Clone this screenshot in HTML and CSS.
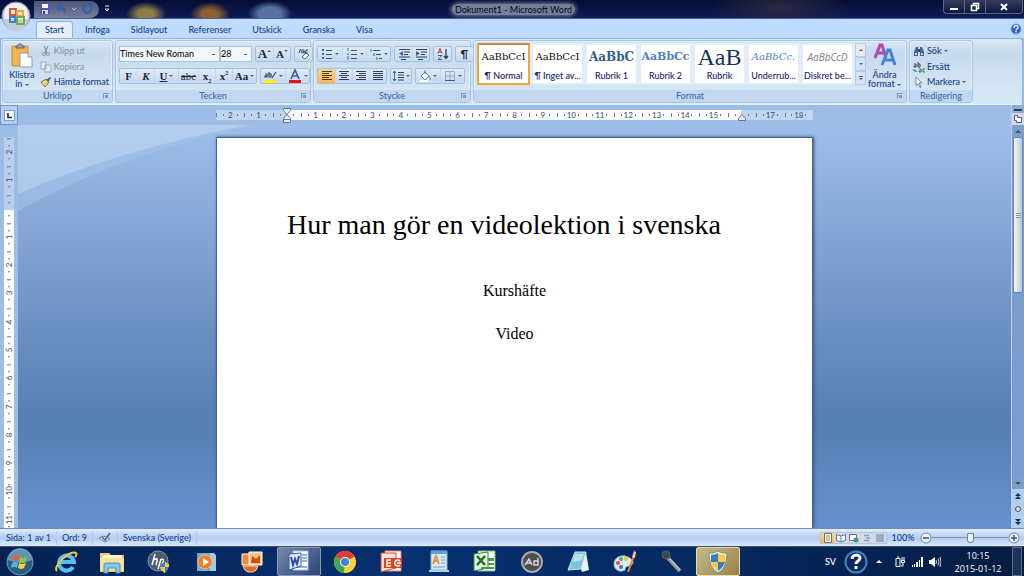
FILE: index.html
```html
<!doctype html>
<html lang="sv">
<head>
<meta charset="UTF-8">
<title>Dokument1 - Microsoft Word</title>
<link rel="stylesheet" href="styles.css">
</head>
<body>
	<header class="titlebar">
		<button class="orb" aria-label="Office-knappen">
			<svg viewBox="0 0 30 30" width="30" height="30">
				<circle cx="15" cy="15" r="14" fill="#c9d3e2" stroke="#8592aa"/>
				<circle cx="15" cy="14" r="12" fill="#eef1f6"/>
				<path d="M3 18a12 12 0 0 0 24 0z" fill="#c3cbd9"/>
				<g fill="none" stroke-width="2"><rect x="9" y="8" width="6" height="6" stroke="#e2572b"/><rect x="16" y="10" width="6" height="5" stroke="#f2a52c"/><rect x="9" y="16" width="5" height="5" stroke="#3c7fd0"/><rect x="16" y="16" width="7" height="7" stroke="#6fae3e"/></g>
			</svg>
		</button>
		<div class="quick">
			<button aria-label="Spara"><svg viewBox="0 0 12 12" width="12" height="12"><path d="M1 1h10v10H1z" fill="#4d58b8"/><path d="M3 1h6v4H3z" fill="#f4f6ff"/><path d="M3 7h6v4H3z" fill="#d4dbf4"/><path d="M4 8h2v3H4z" fill="#363f8b"/></svg></button>
			<button aria-label="Ångra"><svg viewBox="0 0 12 12" width="12" height="12"><path d="M1 5l4-4v3c5-1 7 3 4 7 0-3-1-4-4-4v2z" fill="#355fae"/></svg></button>
			<button class="narrow" aria-label="Ångra flera"><svg viewBox="0 0 6 6" width="6" height="6"><path d="M1 2l2 2 2-2" fill="none" stroke="#c3cbe0"/></svg></button>
			<button aria-label="Gör om"><svg viewBox="0 0 12 12" width="12" height="12"><path d="M5 2a4 4 0 1 0 5 3" fill="none" stroke="#2e5bb4" stroke-width="2"/><path d="M6 0h5v5z" fill="#2e5bb4"/></svg></button>
		</div>
		<button class="custom" aria-label="Anpassa"><svg viewBox="0 0 6 8" width="6" height="8"><path d="M1 1h4" stroke="#dfe6f5"/><path d="M1 4l2 2 2-2z" fill="none" stroke="#dfe6f5"/></svg></button>
		<h1 class="title"><span>Dokument1 - Microsoft Word</span></h1>
		<div class="winbtns">
			<button aria-label="Minimera"><svg viewBox="0 0 10 10" width="10" height="10"><path d="M1 6h8v2H1z" fill="#fff"/></svg></button>
			<button aria-label="Återställ"><svg viewBox="0 0 10 10" width="10" height="10"><path d="M3.500 3V1.500h5v5H7M1.500 3.500h5v5h-5z" fill="none" stroke="#fff" stroke-width="1.500"/></svg></button>
			<button class="close" aria-label="Stäng"><svg viewBox="0 0 10 10" width="10" height="10"><path d="M2 2l6 6M8 2L2 8" stroke="#fff" stroke-width="2"/></svg></button>
		</div>
	</header>

	<nav class="tabs">
		<a class="tab on" href="#">Start</a>
		<a class="tab" href="#">Infoga</a>
		<a class="tab" href="#">Sidlayout</a>
		<a class="tab" href="#">Referenser</a>
		<a class="tab" href="#">Utskick</a>
		<a class="tab" href="#">Granska</a>
		<a class="tab" href="#">Visa</a>
		<button class="help" aria-label="Hjälp"><svg viewBox="0 0 12 12" width="12" height="12"><circle cx="6" cy="6" r="5" fill="#2f62c4" stroke="#7c9ddd"/><path d="M4 5c0-3 4-3 4-.5C8 6 6 6 6 7.500M6 8v1.500" fill="none" stroke="#fff" stroke-width="1.300"/></svg></button>
	</nav>

	<div class="ribbon">
		<section class="group clip">
			<div class="tools">
				<button class="big paste">
					<svg viewBox="0 0 22 25" width="22" height="25"><rect x="1" y="3" width="16" height="20" rx="1" fill="#f0b54e" stroke="#c98e2d"/><path d="M5 5V3h2c0-3 4-3 4 0h2v2z" fill="#9aa3b1" stroke="#5c6675"/><path d="M9 10h8l4 4v10H9z" fill="#fff" stroke="#8b9cb8"/><path d="M17 10v4h4" fill="#dfe7f2" stroke="#8b9cb8"/></svg>
					<span>Klistra<br>in <i class="arr"></i></span>
				</button>
				<div class="list">
					<button class="off"><svg viewBox="0 0 12 12" width="12" height="12"><path d="M4 1l3 7M8 1L5 8" stroke="#8d99ae" stroke-width="1.200"/><circle cx="4" cy="9" r="1.600" fill="none" stroke="#8d99ae"/><circle cx="8" cy="9" r="1.600" fill="none" stroke="#8d99ae"/></svg>Klipp ut</button>
					<button class="off"><svg viewBox="0 0 12 12" width="12" height="12"><path d="M1 1h5v7H1zM5 4h5l1 1v6H5z" fill="#e8edf5" stroke="#9aa8bf"/></svg>Kopiera</button>
					<button><svg viewBox="0 0 12 12" width="12" height="12"><path d="M1 6l5-3 3 3-4 5z" fill="#f2d27c" stroke="#8d7233"/><path d="M6 4l4-3 1 1-3 4z" fill="#4f5f85"/></svg>Hämta format</button>
				</div>
			</div>
			<footer>Urklipp<i class="more"></i></footer>
		</section>

		<section class="group font">
			<div class="tools rows">
				<div class="row">
					<div class="combo">
						<select class="face" aria-label="Teckensnitt"><option>Times New Roman</option></select>
						<select class="size" aria-label="Teckenstorlek"><option>28</option></select>
					</div>
					<div class="set">
						<button class="serif grow" aria-label="Förstora">A<i class="arr up"></i></button>
						<button class="serif shrink" aria-label="Förminska">A<i class="arr"></i></button>
					</div>
					<div class="set">
						<button aria-label="Radera formatering"><svg viewBox="0 0 14 14" width="14" height="14"><path d="M2 6l1.500-4L5 6M6 2v4M6 4h2v2H6M11 3H9v3h2" fill="none" stroke="#3c4763"/><path d="M5 10l4-4 3 2-4 4z" fill="#fff" stroke="#5f6c8e"/></svg></button>
					</div>
				</div>
				<div class="row">
					<div class="set">
						<button class="serif"><b>F</b></button>
						<button class="serif"><b><em>K</em></b></button>
						<button class="serif wide"><b><u>U</u></b> <i class="arr"></i></button>
						<button class="serif strike"><s>abc</s></button>
						<button class="serif"><b>x<sub>2</sub></b></button>
						<button class="serif"><b>x<sup>2</sup></b></button>
						<button class="serif wide"><b>Aa</b><i class="arr"></i></button>
					</div>
					<div class="set">
						<button class="wide" aria-label="Överstrykning"><svg viewBox="0 0 14 14" width="14" height="14"><path d="M1 11h12v3H1z" fill="#fff200"/><path d="M2 5h2v3H2V7h2M6 3v5h2V5H6M9 9l4-6" fill="none" stroke="#39435c" stroke-width="1.200"/></svg><i class="arr"></i></button>
						<button class="wide" aria-label="Teckenfärg"><svg viewBox="0 0 14 14" width="14" height="14"><path d="M1 11h12v3H1z" fill="#e8141c"/><path d="M3 10l4-9 4 9M4.500 7h5" fill="none" stroke="#3c5b9c" stroke-width="1.600"/></svg><i class="arr"></i></button>
					</div>
				</div>
			</div>
			<footer>Tecken<i class="more"></i></footer>
		</section>

		<section class="group para">
			<div class="tools rows">
				<div class="row">
					<div class="set">
						<button class="wide" aria-label="Punktlista"><svg viewBox="0 0 12 12" width="12" height="12"><path d="M1 2h2M1 6h2M1 10h2" stroke="#3b64ad" stroke-width="2"/><path d="M5 2.500h6M5 6.500h6M5 10.500h6" stroke="#444f68"/></svg><i class="arr"></i></button>
						<button class="wide" aria-label="Numrering"><svg viewBox="0 0 12 12" width="12" height="12"><path d="M2 0v3M1 6h2M2 8v4" stroke="#3b64ad"/><path d="M5 2.500h6M5 6.500h6M5 10.500h6" stroke="#444f68"/></svg><i class="arr"></i></button>
						<button class="wide" aria-label="Flernivålista"><svg viewBox="0 0 12 12" width="12" height="12"><path d="M1 1v3M4 5v3M7 9v3" stroke="#3b64ad"/><path d="M3 2.500h7M6 6.500h5M9 10.500h3" stroke="#444f68"/></svg><i class="arr"></i></button>
					</div>
					<div class="set">
						<button aria-label="Minska indrag"><svg viewBox="0 0 12 12" width="12" height="12"><path d="M1 1.500h11M6 4h6M6 6.500h4M1 9h11M3 11.500h5" stroke="#333e58"/><path d="M5 3v5L1 5.500z" fill="#3b64ad"/></svg></button>
						<button aria-label="Öka indrag"><svg viewBox="0 0 12 12" width="12" height="12"><path d="M1 1.500h11M6 4h6M6 6.500h4M1 9h11M3 11.500h5" stroke="#333e58"/><path d="M1 3v5l4-2.500z" fill="#3b64ad"/></svg></button>
					</div>
					<div class="set">
						<button aria-label="Sortera"><svg viewBox="0 0 12 12" width="12" height="12"><path d="M1 5.500L3 .5l2 5M2 4h2" fill="none" stroke="#b3363c"/><path d="M1 7.500h4l-4 4h4" fill="none" stroke="#3b64ad"/><path d="M9 1v9M7 8l2 2.500L11 8" fill="none" stroke="#333e58" stroke-width="1.300"/></svg></button>
					</div>
					<div class="set">
						<button class="mark" aria-label="Visa alla">¶</button>
					</div>
				</div>
				<div class="row">
					<div class="set">
						<button class="lit" aria-label="Vänsterjustera"><svg viewBox="0 0 12 12" width="12" height="12"><path d="M1 1.500h10M1 3.500h7M1 5.500h10M1 7.500h7M1 9.500h10" stroke="#4b3c22"/></svg></button>
						<button aria-label="Centrera"><svg viewBox="0 0 12 12" width="12" height="12"><path d="M1 1.500h10M3 3.500h6M1 5.500h10M3 7.500h6M1 9.500h10" stroke="#333e58"/></svg></button>
						<button aria-label="Högerjustera"><svg viewBox="0 0 12 12" width="12" height="12"><path d="M1 1.500h10M4 3.500h7M1 5.500h10M4 7.500h7M1 9.500h10" stroke="#333e58"/></svg></button>
						<button aria-label="Marginaljustera"><svg viewBox="0 0 12 12" width="12" height="12"><path d="M1 1.500h10M1 3.500h10M1 5.500h10M1 7.500h10M1 9.500h10" stroke="#333e58"/></svg></button>
					</div>
					<div class="set">
						<button class="tight" aria-label="Radavstånd"><svg viewBox="0 0 12 12" width="12" height="12"><path d="M2.500 1v10M1 3l1.500-2L4 3M1 9l1.500 2L4 9" fill="none" stroke="#3b64ad"/><path d="M6 2.500h6M6 5h6M6 7.500h6M6 10h6" stroke="#333e58"/></svg><i class="arr"></i></button>
					</div>
					<div class="set">
						<button class="wide" aria-label="Fyllning"><svg viewBox="0 0 12 12" width="12" height="12"><path d="M2 6l4-4 4 4-4 4z" fill="#f2f5fa" stroke="#7383a0"/><path d="M6 4V0M10 6c1 2 2 3 1 4" fill="none" stroke="#5b77ab"/><path d="M1 10h8v2H1z" fill="#fff"/></svg><i class="arr"></i></button>
						<button class="wide" aria-label="Kantlinjer"><svg viewBox="0 0 12 12" width="12" height="12"><path d="M1.500 1.500h9v9M1.500 1.500v9M6 1v9M1 6h10" fill="none" stroke="#9aa8c2"/><path d="M1 10.500h10" stroke="#4a5a7d"/></svg><i class="arr"></i></button>
					</div>
				</div>
			</div>
			<footer>Stycke<i class="more"></i></footer>
		</section>

		<section class="group format">
			<div class="tools">
				<div class="gallery">
					<button class="style on"><span class="s-text">AaBbCcI</span>¶ Normal</button>
					<button class="style"><span class="s-text">AaBbCcI</span>¶ Inget av...</button>
					<button class="style"><span class="s-text s-h1">AaBbC</span>Rubrik 1</button>
					<button class="style"><span class="s-text s-h2">AaBbCc</span>Rubrik 2</button>
					<button class="style"><span class="s-text s-title">AaB</span>Rubrik</button>
					<button class="style"><span class="s-text s-sub">AaBbCc.</span>Underrub...</button>
					<button class="style"><span class="s-text s-weak">AaBbCcD</span>Diskret be...</button>
					<div class="scroller">
						<button class="dim" aria-label="Upp"><i class="arr up"></i></button>
						<button aria-label="Ned"><i class="arr"></i></button>
						<button aria-label="Mer"><i class="arr bar"></i></button>
					</div>
				</div>
				<button class="big change">
					<svg viewBox="0 0 24 25" width="24" height="25"><path d="M2 15L7 2h2l4 13M4 10h8" fill="none" stroke="#b04bb5" stroke-width="3"/><path d="M9 22l6-15h2l5 15M11 17h9" fill="none" stroke="#4585d0" stroke-width="3"/></svg>
					<span>Ändra<br>format <i class="arr"></i></span>
				</button>
			</div>
			<footer>Format<i class="more"></i></footer>
		</section>

		<section class="group edit">
			<div class="tools">
				<div class="list">
					<button><svg viewBox="0 0 12 12" width="12" height="12"><path d="M1 11V7l2-5h2v9zM7 11V2h2l2 5v4z" fill="#45618f"/><path d="M5 4h2v3H5z" fill="#2d4269"/><path d="M2 8h2v2H2zM8 8h2v2H8z" fill="#b9cbe8"/></svg>Sök <i class="arr"></i></button>
					<button><svg viewBox="0 0 12 12" width="12" height="12"><path d="M1 3h2v3H1V5h2M5 1v5h2V3H5" fill="none" stroke="#39435c"/><path d="M6 8h2v3H6v-1h2M12 8h-2v3h2" fill="none" stroke="#2e8b3d"/><path d="M1 8v2h3" fill="none" stroke="#3b64ad"/></svg>Ersätt</button>
					<button><svg viewBox="0 0 12 12" width="12" height="12"><path d="M3 1l6 6H6l2 4-1 .5L5 8 3 9.500z" fill="#fff" stroke="#7584a0"/></svg>Markera <i class="arr"></i></button>
				</div>
			</div>
			<footer>Redigering</footer>
		</section>
	</div>

	<main class="work">
		<div class="left">
			<button class="tabstop" aria-label="Tabbtyp"><svg viewBox="0 0 11 11" width="11" height="11"><rect x=".5" y=".5" width="10" height="10" fill="#f4f8ff" stroke="#7d9cca"/><path d="M4 3v4.500h4" fill="none" stroke="#1b2740" stroke-width="1.600"/></svg></button>
			<div class="vruler">
				<span>2</span><span>1</span><span class="zero"></span><span>1</span><span>2</span><span>3</span><span>4</span><span>5</span><span>6</span><span>7</span><span>8</span><span>9</span><span>10</span><span>11</span>
			</div>
		</div>
		<div class="center">
			<div class="hrow">
				<div class="hruler">
					<span>2</span><span>1</span><span class="zero"><svg viewBox="0 0 10 16" width="10" height="16"><path d="M1.500.5h7v2L5 6.500l3.500 4v4h-7v-4L5 6.500l-3.500-4zM1.500 11.500h7" fill="#eaf1fb" stroke="#64799f"/></svg></span><span>1</span><span>2</span><span>3</span><span>4</span><span>5</span><span>6</span><span>7</span><span>8</span><span>9</span><span>10</span><span>11</span><span>12</span><span>13</span><span>14</span><span>15</span><span class="zero"><svg viewBox="0 0 10 16" width="10" height="16"><path d="M1.500 12.500v-2L5 6.500l3.500 4v2z" fill="#eaf1fb" stroke="#64799f"/></svg></span><span>17</span><span>18</span>
				</div>
			</div>
			<div class="desk">
				<svg class="swoosh" viewBox="0 0 240 90" width="240" height="90"><path d="M0 0h235Q100 30 0 86z" fill="#a5c3ea" fill-opacity=".5"/><path d="M0 0h230Q100 25 0 69z" fill="#c3daf3" fill-opacity=".5"/></svg>
				<article class="page">
					<h2>Hur man gör en videolektion i svenska</h2>
					<p>Kurshäfte</p>
					<p>Video</p>
				</article>
			</div>
		</div>
		<div class="scroll">
			<i class="split"></i>
			<button class="rulerbtn" aria-label="Visa linjal"><svg viewBox="0 0 10 10" width="10" height="10"><path d="M1.500 1.500h3v2h4v5h-5v-2h-2z" fill="#fff" stroke="#5d5c80"/></svg></button>
			<button class="end-btn" aria-label="Upp"><i class="arr up"></i></button>
			<div class="track"><div class="thumb"><i></i></div></div>
			<button class="end-btn" aria-label="Ned"><i class="arr"></i></button>
			<div class="browse">
				<button aria-label="Föregående sida"><svg viewBox="0 0 8 8" width="8" height="8"><path d="M1 4l3-3 3 3zM1 7l3-3 3 3z" fill="#1b2c55"/></svg></button>
				<button aria-label="Bläddra"><svg viewBox="0 0 8 8" width="8" height="8"><circle cx="4" cy="4" r="2.500" fill="#e9e4da" stroke="#4b5064"/></svg></button>
				<button aria-label="Nästa sida"><svg viewBox="0 0 8 8" width="8" height="8"><path d="M1 1l3 3 3-3zM1 4l3 3 3-3z" fill="#1b2c55"/></svg></button>
			</div>
		</div>
	</main>

	<div class="status">
		<span class="cell">Sida: 1 av 1</span>
		<span class="cell">Ord: 9</span>
		<span class="cell"><svg viewBox="0 0 14 12" width="14" height="12"><path d="M1 6l5-2 6 3-5 3z" fill="#fff" stroke="#6579a0"/><path d="M4 5l3 3 5-7" fill="none" stroke="#3f5f9c" stroke-width="1.500"/></svg></span>
		<span class="cell">Svenska (Sverige)</span>
		<div class="views">
			<button class="lit" aria-label="Utskriftslayout"><svg viewBox="0 0 10 10" width="10" height="10"><path d="M1.500.5h7v9h-7z" fill="#fff" stroke="#7b6a44"/><path d="M3 3h4M3 5h4M3 7h4" stroke="#98876a"/></svg></button>
			<button aria-label="Helskärmsläsning"><svg viewBox="0 0 10 10" width="10" height="10"><path d="M.5 1.500L5 3l4.500-1.500v6L5 9 .5 7.500zM5 3v6" fill="#fff" stroke="#66738d"/></svg></button>
			<button aria-label="Webblayout"><svg viewBox="0 0 10 10" width="10" height="10"><path d="M.5 1.500h7v6h-7z" fill="#fff" stroke="#66738d"/><circle cx="7" cy="7" r="2.500" fill="#4c8f72"/></svg></button>
			<button aria-label="Disposition"><svg viewBox="0 0 10 10" width="10" height="10"><path d="M2 2.500h5M4 5h4M2 7.500h5" stroke="#8f9db5" stroke-width="1.500"/></svg></button>
			<button aria-label="Utkast"><svg viewBox="0 0 10 10" width="10" height="10"><path d="M1 2h8M1 4h8M1 6h8M1 8h8" stroke="#8f9db5" stroke-width="1.500"/></svg></button>
		</div>
		<button class="percent">100%</button>
		<div class="zoom">
			<button aria-label="Zooma ut"><svg viewBox="0 0 12 12" width="12" height="12"><circle cx="6" cy="6" r="5" fill="#f0f5fc" stroke="#6d83ab"/><path d="M3 6h6" stroke="#3d4d70" stroke-width="1.500"/></svg></button>
			<input type="range" min="0" max="100" value="50" aria-label="Zooma">
			<button aria-label="Zooma in"><svg viewBox="0 0 12 12" width="12" height="12"><circle cx="6" cy="6" r="5" fill="#f0f5fc" stroke="#6d83ab"/><path d="M3 6h6M6 3v6" stroke="#3d4d70" stroke-width="1.500"/></svg></button>
		</div>
	</div>

	<footer class="taskbar">
		<button class="start" aria-label="Start"><svg viewBox="0 0 28 28" width="28" height="28"><circle cx="14" cy="14" r="13" fill="#2a5c86" stroke="#6f9cb8"/><path d="M2 12a12 12 0 0 1 24 0Q14 18 2 12z" fill="#8fb8cc" fill-opacity=".6"/><path d="M7 9q3-3 6-1l-1 5q-3-2-6 0z" fill="#f1592a"/><path d="M14 9q3 2 7 0l-1 5q-4 2-7 0z" fill="#8cc63f"/><path d="M6 15q3-2 6 0l-1 5q-3-2-6 0z" fill="#4fb3f0"/><path d="M13 15q3 2 7 0l-2 5q-3 2-6 0z" fill="#ffd02e"/></svg></button>
		<div class="apps">
			<button aria-label="Internet Explorer"><svg viewBox="0 0 24 24" width="24" height="24"><path d="M19 17a7.500 7.500 0 1 1 1-5H7" fill="none" stroke="#58bdf0" stroke-width="4"/><path d="M3 21C-2 17 15 0 22 3c1 1 0 3-1 4" fill="none" stroke="#f5c842" stroke-width="2"/></svg></button>
			<button aria-label="Utforskaren"><svg viewBox="0 0 26 24" width="26" height="24"><path d="M1 3h9l2 2h13v17H1z" fill="#e8c868"/><path d="M3 5h20v5H3z" fill="#fff6cf"/><path d="M1 8h24v13H1z" fill="#f6e199"/><path d="M5 23v-8q0-2 2-2h12q2 0 2 2v8h-4v-5H9v5z" fill="#86c5ea" stroke="#4d93c4"/></svg></button>
			<button aria-label="HP"><svg viewBox="0 0 24 24" width="24" height="24"><circle cx="11" cy="11" r="10" fill="#4b5b70" stroke="#8496ab"/><path d="M8 4L5 15M7 10q4-3 3 1L9 15M14 9l-3 10M13 10q5-2 3 2-1 4-4 2" fill="none" stroke="#fff" stroke-width="1.500"/><path d="M13 14l5-2 4 2q0 6-4 9-5-3-5-9z" fill="#3e7fd0"/><path d="M18 12l4 2v3h-4zM13 17h5v6q-4-2-5-6z" fill="#f6c935"/></svg></button>
			<button aria-label="Windows Media Player"><svg viewBox="0 0 24 24" width="24" height="24"><path d="M3 3h17l2 2v16H3z" fill="#9ccbe8"/><path d="M3 3h13v18H3z" fill="#6faed6"/><circle cx="11" cy="12" r="7" fill="#f07c26" stroke="#fbb676"/><path d="M9 8v8l6-4z" fill="#fff"/></svg></button>
			<button aria-label="Bilder"><svg viewBox="0 0 24 24" width="24" height="24"><path d="M2 4h13v11H2z" fill="#eb8b33" stroke="#fff"/><path d="M9 2h13v13H9z" fill="#f8c87b" stroke="#fff"/><path d="M11 13l1-7 4 3 4-4v8z" fill="#cf4a17"/><path d="M3 16h15q-1 5-5 6H8q-4-1-5-6z" fill="#dc6e23" stroke="#fbd09b"/></svg></button>
			<button class="on" aria-label="Word"><svg viewBox="0 0 24 24" width="24" height="24"><path d="M6 1h15v19H6z" fill="#fff" stroke="#a9bcdd"/><path d="M15 5h5M15 8h5M15 11h5M9 17h11" stroke="#355fae"/><path d="M2 4l12-1v13L2 20z" fill="#dfe9f8" stroke="#2f5ca8"/><path d="M4 7l2 8 2-6 2 5 2-8" fill="none" stroke="#2b539d" stroke-width="2"/></svg></button>
			<button aria-label="Chrome"><svg viewBox="0 0 24 24" width="24" height="24"><circle cx="12" cy="12" r="11" fill="#ffd33b"/><path d="M12 12L2.500 6.500A11 11 0 0 1 21.500 6.500z" fill="#e13c30"/><path d="M12 12L2.500 6.500A11 11 0 0 0 11 23z" fill="#40a84f"/><circle cx="12" cy="12" r="5" fill="#fff"/><circle cx="12" cy="12" r="4" fill="#4285d8"/></svg></button>
			<button aria-label="PowerPoint"><svg viewBox="0 0 24 24" width="24" height="24"><path d="M5 1h16v20H5z" fill="#fff" stroke="#e0866c"/><path d="M1 3h15v15L1 22z" fill="#fbe3da" stroke="#d5461f"/><path d="M4 8h18v10H4z" fill="#d5461f"/><path d="M11 10H7v6h4M7 13h4M20 11a3 3 0 1 0 0 4M17 13h4" fill="none" stroke="#fff" stroke-width="1.500"/></svg></button>
			<button aria-label="WordPad"><svg viewBox="0 0 24 24" width="24" height="24"><path d="M4 1h16v19H4z" fill="#d7e9f8" stroke="#8cb3d8"/><path d="M4 1h16v3H4z" fill="#58a4dd"/><path d="M6 14l3-8 3 8M7 11h4" fill="none" stroke="#ec9333" stroke-width="2"/><path d="M14 7h4M14 10h4M14 13h4M6 17h12" stroke="#6d9ac5"/><path d="M2 20h20v2H2z" fill="#b5cde2"/></svg></button>
			<button aria-label="Excel"><svg viewBox="0 0 24 24" width="24" height="24"><path d="M5 1h17v20H5z" fill="#fff" stroke="#7fb77b"/><path d="M1 4l14-2v16L1 21z" fill="#e2f2df" stroke="#3c8a3b"/><path d="M4 6l8 9M12 6l-8 9" stroke="#26702c" stroke-width="2.500"/><path d="M15 8h6v3h-6zM15 13h6v2h-6zM8 17h13v2H8z" fill="#4c9a49"/></svg></button>
			<button aria-label="Ad"><svg viewBox="0 0 24 24" width="24" height="24"><circle cx="12" cy="12" r="10" fill="#4d4d4d" stroke="#aaa" stroke-width="2"/><path d="M5 15l4-6 3 6M7 13h4M18 8v7h-4v-4h4" fill="none" stroke="#d8d8d8" stroke-width="1.500"/></svg></button>
			<button aria-label="Anteckningar"><svg viewBox="0 0 24 24" width="24" height="24"><path d="M9 2h11l-5 17-13 1z" fill="#7cc4d6" stroke="#c5eaf0"/><path d="M20 2l3 18-7 2-1-3z" fill="#e6f3f4"/><path d="M9 4h9l-2 6-9 2z" fill="#b7e3ec"/></svg></button>
			<button aria-label="Paint"><svg viewBox="0 0 24 24" width="24" height="24"><path d="M1 14C1 7 9 4 15 7c7 3 6 8 1 9-3 0-4 2-4 4-5 3-11 0-11-6z" fill="#dceaf4" stroke="#8bb0cb"/><circle cx="5" cy="13" r="2" fill="#e34d33"/><circle cx="8" cy="9" r="2" fill="#57ad47"/><circle cx="13" cy="9" r="2" fill="#f1c232"/><circle cx="8" cy="17" r="2" fill="#3a6fcf"/><path d="M15 22l6-16" stroke="#d98b35" stroke-width="2"/><path d="M19 7l2-6 2 1-1 6z" fill="#f0c98b"/></svg></button>
			<button aria-label="Ljudinspelaren"><svg viewBox="0 0 24 24" width="24" height="24"><path d="M8 8l12 13" stroke="#9097a3" stroke-width="4"/><path d="M10 9l10 11" stroke="#d7dbe1"/><circle cx="6" cy="5" r="4" fill="#3f434d" stroke="#565b66"/></svg></button>
			<button class="gold" aria-label="Säkerhet"><svg viewBox="0 0 24 24" width="24" height="24"><path d="M12 1q5 3 9 2 0 15-9 20Q3 18 3 3q4 1 9-2z" fill="#eef0f2" stroke="#808b99"/><path d="M12 3v9H5V5q4 0 7-2zM12 12h7q-2 6-7 9z" fill="#3a78c6"/><path d="M12 3q3 2 7 2v7h-7zM5 12h7v9q-5-3-7-9z" fill="#f7cf3c"/></svg></button>
		</div>
		<div class="tray">
			<span class="lang">SV</span>
			<button aria-label="Hjälp"><svg viewBox="0 0 24 24" width="24" height="24"><circle cx="12" cy="12" r="10.500" fill="#0b2a5c" stroke="#3f86c4" stroke-width="2"/><path d="M8 9c0-5 8-5 8-1 0 3-4 3-4 6M12 16v3" fill="none" stroke="#fff" stroke-width="3"/></svg></button>
			<button class="slot first" aria-label="Dolda ikoner"><i class="arr up light"></i></button>
			<button class="slot" aria-label="Batteri"><svg viewBox="0 0 12 12" width="12" height="12"><path d="M3 2.500h4v8H3zM4 1h2M9 1v3M11 1v3M8.500 4.500h3v2h-3zM10 7v3H8" fill="none" stroke="#fff"/></svg></button>
			<button class="slot" aria-label="Nätverk"><svg viewBox="0 0 12 12" width="12" height="12"><path d="M1 9h1v2H1zM3 8h1v3H3zM5 6h2v5H5zM8 4h1v7H8zM10 1h2v10h-2z" fill="#fff"/></svg></button>
			<button class="slot" aria-label="Volym"><svg viewBox="0 0 12 12" width="12" height="12"><path d="M0 4h2l4-3v10L2 8H0z" fill="#fff"/><path d="M7 4q1 2 0 4M9 2.500q2 3.500 0 7M11 1q2 5 0 10" fill="none" stroke="#cfd6e4"/></svg></button>
			<time class="clock">10:15<br>2015-01-12</time>
			<button class="peek" aria-label="Visa skrivbordet"></button>
		</div>
	</footer>
</body>
</html>
```
FILE: styles.css
```css
* {margin:0;padding:0;box-sizing:border-box;}
body{height:100vh;display:flex;flex-direction:column;overflow:hidden;font:500 9px/12px Lato,"Open Sans",sans-serif;color:#15428b;background:#9dbde6;}
button,select,input{font:inherit;color:inherit;background:none;border:0;border-radius:0;}
button{display:flex;align-items:center;justify-content:center;}
a{color:inherit;text-decoration:none;}
svg{display:block;flex:none;}
.arr{display:inline-block;flex:none;width:0;height:0;border:2px solid transparent;border-top-color:#4a6391;border-bottom:0;vertical-align:middle;}
.arr.up{border-top:0;border-bottom:2px solid #4a6391;}
.arr.light{border-width:0 3px 3px;border-bottom-color:#fff;}

/* title bar */
.titlebar{position:relative;z-index:2;flex:none;height:19px;display:flex;align-items:center;padding-left:34px;border-bottom:1px solid #4b5f92;
	background:radial-gradient(ellipse 20px 12px at 146px 14px,#8c7c46 40%,transparent),radial-gradient(ellipse 20px 13px at 210px 15px,#8d5f35 40%,transparent),radial-gradient(ellipse 22px 13px at 270px 14px,#56749f 50%,transparent),radial-gradient(ellipse 70px 24px at 780px 8px,#2a2842,transparent),linear-gradient(#070d33,#0c1c56);}
.orb{position:absolute;left:1px;top:1px;}
.quick{display:flex;align-items:center;gap:4px;height:17px;padding:0 6px 0 5px;border-radius:0 9px 9px 0;background:linear-gradient(#4b5675,#76809b);}
.custom{padding-left:5px;}
.title{flex:1;padding:2px 0 0;margin-right:26px;text-align:center;font-size:9px;line-height:12px;font-weight:400;color:#05070f;}
.title span{padding:0 3px;border-radius:6px;background:#747e9d;box-shadow:0 0 4px 1px #747e9d;}
.winbtns{display:flex;align-self:flex-start;height:14px;margin-right:1px;border:1px solid #5d6684;border-top:0;border-radius:0 0 4px 4px;background:linear-gradient(#343c60,#10163c);}
.winbtns button{width:21px;border-right:1px solid #5d6684;}
.winbtns .close{width:36px;border:0;}

/* tabs */
.tabs{flex:none;height:19px;display:flex;align-items:flex-end;gap:3px;padding:0 2px 0 36px;background:#bfdbff;}
.tab{height:17px;padding:1px 8px 0;line-height:14px;border:1px solid transparent;border-bottom:0;border-radius:3px 3px 0 0;}
.tab.on{background:#e6eff9;border-color:#8db2e3;}
.help{margin-left:auto;align-self:center;}

/* ribbon */
.ribbon{flex:none;display:flex;gap:2px;height:67px;padding:1px;margin-right:1px;border:1px solid #8db2e3;border-bottom:1px solid #d7f4fb;border-radius:3px;background:linear-gradient(#dce8f6,#c7daee 20%,#d8e8f6);}
.group{display:flex;flex-direction:column;flex:none;border:1px solid #a9c4e4;border-radius:3px;box-shadow:inset 0 0 0 1px #e4effa;}
.group footer{position:relative;height:12px;line-height:11px;text-align:center;color:#3e6aaa;background:#c1d8f0;border-radius:0 0 2px 2px;}
.tools{flex:1;display:flex;padding:2px 3px 0;min-height:0;}
.more{position:absolute;right:3px;top:3px;width:6px;height:6px;border:1px solid #7b97c2;border-right-color:transparent;border-bottom-color:transparent;}
.more:after{content:"";position:absolute;right:0;bottom:0;width:3px;height:3px;background:#7b97c2;}
.clip{width:111px;}
.font{width:196px;}
.para{width:158px;}
.format{width:434px;}
.edit{width:64px;}
.big{flex-direction:column;justify-content:flex-start;line-height:9px;text-align:center;gap:2px;}
.paste{width:32px;margin-right:2px;}
.change{width:40px;}
.list{display:flex;flex-direction:column;}
.list button{height:16px;gap:2px;justify-content:flex-start;white-space:nowrap;}
.list .off{color:#8d97a8;}
.rows{flex-direction:column;gap:6px;padding-top:5px;}
.row{display:flex;height:16px;gap:3px;}
.set{display:flex;border:1px solid #a3bfe2;border-radius:2px;background:linear-gradient(#dfeaf7,#c6d9ef);}
.set button{width:17px;color:#1f2738;}
.set .wide{width:24px;gap:2px;}
.set .strike{width:20px;}
.set .tight{width:20px;gap:2px;}
.set button + button{border-left:1px solid #c3d6ed;}
.para .row{gap:3px;}
.lit{background:linear-gradient(#ffd58a,#ffb646);}
.mark{font-size:11px;}
.combo{display:flex;}
.combo select{appearance:none;height:16px;color:#111;border:1px solid #abc1de;background:#f2f7fd linear-gradient(#4a6391,#4a6391) no-repeat right 4px center/3px 1px;}
.face{width:101px;}
.size{width:32px;border-left:0;}
.serif{font-family:"Liberation Serif",serif;font-size:11px;line-height:12px;}
.serif sub,.serif sup{font-size:6px;line-height:0;}
.grow{font-size:13px;font-weight:700;}
.shrink{font-weight:700;}
.grow .arr,.shrink .arr{align-self:flex-start;margin-top:3px;}

.gallery{display:flex;gap:1px;height:42px;background:#e1ecf8;}
.style{flex-direction:column;justify-content:space-between;width:53px;padding:0 1px 2px;border:2px solid #e1ecf8;background:#fff;color:#1b1b6b;white-space:nowrap;line-height:11px;}
.style.on{border-color:#eda83a;border-top-color:#c48a47;}
.s-text{height:24px;line-height:24px;font-family:"DejaVu Serif",serif;font-size:10px;font-weight:400;color:#111;}
.s-h1{font-size:12px;font-weight:700;color:#365f91;}
.s-h2{font-size:11px;font-weight:700;color:#4f81bd;}
.s-title{font-family:"Liberation Serif",serif;font-size:24px;color:#17365d;}
.s-sub{font-style:italic;color:#4f81bd;}
.s-weak{font-style:italic;font-family:"Open Sans",sans-serif;color:#808080;}
.scroller{display:flex;flex-direction:column;width:11px;}
.scroller button{flex:1;border:1px solid #b5cbe7;background:#d4e3f5;}
.scroller .dim{background:#e9e9ea;}
.arr.bar{position:relative;top:1px;}
.arr.bar:before{content:"";position:absolute;left:-2px;top:-4px;width:4px;height:1px;background:#4a6391;}

/* document */
.work{flex:1;display:flex;min-height:0;}
.left{display:flex;flex-direction:column;width:18px;background:#9dbde6;}
.tabstop{flex:none;width:18px;height:20px;margin-bottom:12px;border:1px solid #6f93cf;background:#b5cff0;}
.vruler{flex:1;display:grid;grid-template-rows:repeat(14,1fr);width:10px;margin:0 0 -6px 4px;padding-top:1px;background:linear-gradient(#b9cfec 73px,#fff 73px);}
.vruler span{display:flex;align-items:center;justify-content:center;min-height:0;writing-mode:vertical-rl;transform:rotate(180deg);font-size:8px;line-height:10px;color:#4b5570;
	background:linear-gradient(#6c7896,#6c7896) no-repeat 50% 100%/4px 1px,linear-gradient(#6c7896,#6c7896) no-repeat 50% 25%/2px 1px,linear-gradient(#6c7896,#6c7896) no-repeat 50% 75%/2px 1px;}
.center{flex:1;display:flex;flex-direction:column;min-width:0;}
.hrow{flex:none;height:20px;padding:5px 198px 0;background:#9dbde6;}
.hruler{display:grid;grid-template-columns:repeat(21,1fr);height:10px;background:linear-gradient(90deg,#c0d5f0 12%,#fff 12% 88%,#c0d5f0 88%);}
.hruler span{position:relative;text-align:center;font-size:8px;line-height:10px;color:#4b5570;
	background:linear-gradient(#6c7896,#6c7896) no-repeat 0 50%/1px 4px,linear-gradient(#6c7896,#6c7896) no-repeat 25% 50%/1px 2px,linear-gradient(#6c7896,#6c7896) no-repeat 75% 50%/1px 2px;}
.zero svg{position:absolute;left:50%;top:-2px;margin-left:-5px;}
.desk{position:relative;flex:1;display:flex;padding:12px 198px 0;overflow:hidden;background:linear-gradient(#9fbfea,#6b90c2 50%,#567fb4 74%,#6791ce);}
.swoosh{position:absolute;left:0;top:0;}
.page{position:relative;flex:1;padding:69px 70px 0;border:1px solid #46618f;border-bottom:0;background:#fff;color:#000;font:16px/20px "Liberation Serif","Times New Roman",serif;box-shadow:1px 0 3px #35507e;text-align:center;}
.page h2{margin-bottom:38px;font-size:28px;line-height:36px;font-weight:400;text-align:left;white-space:nowrap;}
.page p{margin-bottom:23px;}
.scroll{display:flex;flex-direction:column;align-items:center;width:13px;border-left:1px solid #bad2f0;background:#8cadd8;}
.split{width:8px;height:2px;margin:4px 0 2px;background:#2a3d66;}
.rulerbtn{width:12px;height:12px;background:#d5d8e2;}
.end-btn{width:12px;height:12px;background:#7f9fcb;}
.end-btn .arr{border-width:3px 3px 0;border-top-color:#34507f;}
.end-btn .arr.up{border-width:0 3px 3px;border-bottom-color:#34507f;}
.track{flex:1;width:12px;background:#7b9dcb;}
.thumb{display:flex;align-items:center;justify-content:center;width:10px;height:46%;margin:0 auto;border:1px solid #6b86ae;border-radius:2px;background:linear-gradient(90deg,#f3f6fb,#b9c7dc);}
.thumb i{width:5px;height:5px;background:repeating-linear-gradient(#8c96a8 0 1px,#dde3ed 1px 2px);}
.browse{display:flex;flex-direction:column;justify-content:space-around;width:12px;height:39px;background:#b3cdf0;}

/* status bar */
.status{flex:none;height:18px;display:flex;align-items:center;padding-left:1px;border-top:1px solid #6c8cc0;background:linear-gradient(#e3edfb,#bed5f5 35%,#b4cff3 55%,#dbe9fa);}
.cell{padding:0 5px;border-right:1px solid #b4c9e6;line-height:14px;}
.views{display:flex;height:12px;margin-left:auto;background:#cfdbec;border:1px solid #b3c5df;}
.views button{width:13px;}
.percent{width:32px;}
.zoom{display:flex;align-items:center;width:105px;padding:0 4px 0 1px;}
.zoom input{flex:1;min-width:0;height:12px;appearance:none;background:linear-gradient(#7c91b8,#7c91b8) no-repeat 50%/100% 1px;}
.zoom input::-webkit-slider-thumb{appearance:none;width:7px;height:10px;border:1px solid #6d83ab;border-radius:1px 1px 4px 4px;background:#f3f7fd;}

/* taskbar */
.taskbar{flex:none;display:flex;height:30px;padding-right:2px;color:#fff;border-top:1px solid #3c506f;background:linear-gradient(90deg,#052253,#073070 40%,#06295f 70%,#051c42);}
.start{width:40px;}
.apps{display:grid;grid-template-columns:repeat(15,1fr);gap:3px;width:696px;margin-left:4px;}
.apps .on{border:1px solid #8a9ab8;border-radius:2px;background:linear-gradient(135deg,#7488ad,#2b4675);}
.apps .gold{border:1px solid #e6dba9;border-radius:2px;background:linear-gradient(135deg,#c9bb84,#97814a);}
.tray{flex:1;display:flex;align-items:center;justify-content:flex-end;}
.lang{margin-right:8px;}
.slot{width:18px;}
.slot.first{width:22px;}
.clock{width:68px;font:9px/13px "Open Sans",sans-serif;text-align:center;}
.peek{align-self:stretch;width:10px;border:1px solid #5b6c8b;background:#1c335a;}
```
